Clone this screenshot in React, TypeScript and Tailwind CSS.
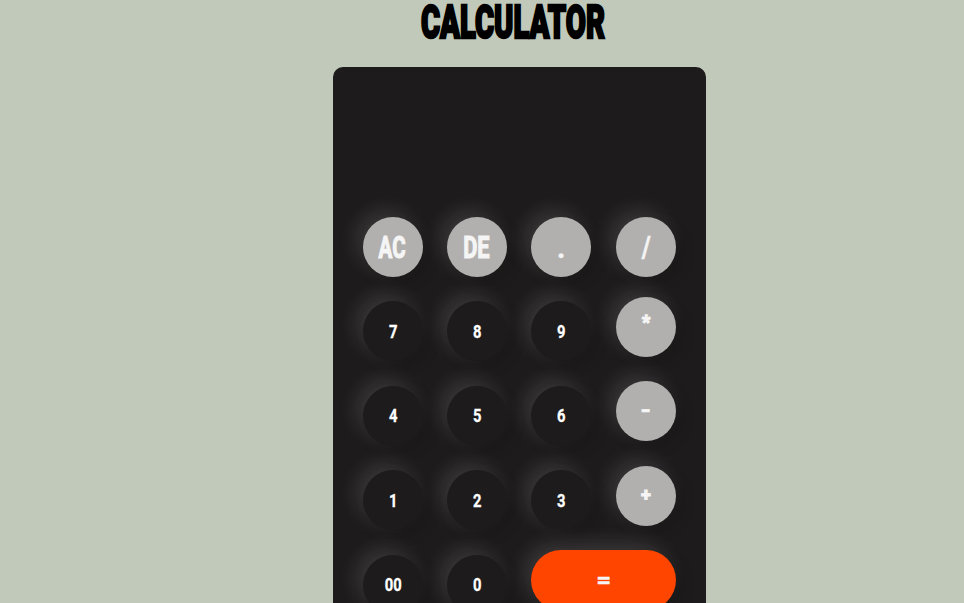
import { clsx } from 'clsx';

type Key = { label: string; kind: 'num' | 'op' | 'eq'; top?: string; glyph: string };

const num = 'text-[18px] scale-x-[0.82] [-webkit-text-stroke:0.3px_white]';

const rows: { keys: Key[] }[] = [
  {
    keys: [
      { label: 'AC', kind: 'op', glyph: 'text-[32px] scale-x-[0.64] -translate-x-px [-webkit-text-stroke:1.2px_#f5f5f5]' },
      { label: 'DE', kind: 'op', glyph: 'text-[32px] scale-x-[0.68] -translate-x-px [-webkit-text-stroke:1.2px_#f5f5f5]' },
      { label: '.', kind: 'op', glyph: 'text-[32px] scale-x-[0.9] translate-x-[0.5px] [-webkit-text-stroke:0.4px_#f5f5f5]' },
      { label: '/', kind: 'op', glyph: 'text-[29px] scale-x-[0.84] [-webkit-text-stroke:0.4px_#f5f5f5]' },
    ],
  },
  {
    keys: [
      { label: '7', kind: 'num', top: 'mt-1', glyph: clsx(num, 'translate-y-px') },
      { label: '8', kind: 'num', top: 'mt-1', glyph: clsx(num, 'translate-y-px') },
      { label: '9', kind: 'num', top: 'mt-1', glyph: clsx(num, 'translate-y-px') },
      { label: '*', kind: 'op', glyph: 'text-[18px] -translate-y-[5px] [-webkit-text-stroke:1.3px_#f5f5f5]' },
    ],
  },
  {
    keys: [
      { label: '4', kind: 'num', top: 'mt-[5px]', glyph: num },
      { label: '5', kind: 'num', top: 'mt-[5px]', glyph: num },
      { label: '6', kind: 'num', top: 'mt-[5px]', glyph: num },
      { label: '-', kind: 'op', glyph: 'text-[24px] scale-x-[1.1] -translate-y-px [-webkit-text-stroke:0.6px_#f5f5f5]' },
    ],
  },
  {
    keys: [
      { label: '1', kind: 'num', top: 'mt-1', glyph: clsx(num, 'translate-y-px') },
      { label: '2', kind: 'num', top: 'mt-1', glyph: clsx(num, 'translate-y-px') },
      { label: '3', kind: 'num', top: 'mt-1', glyph: clsx(num, 'translate-y-px') },
      { label: '+', kind: 'op', glyph: 'text-[18px] -translate-y-px [-webkit-text-stroke:1px_#f5f5f5]' },
    ],
  },
  {
    keys: [
      { label: '00', kind: 'num', top: 'mt-[5px]', glyph: num },
      { label: '0', kind: 'num', top: 'mt-[5px]', glyph: num },
      { label: '=', kind: 'eq', glyph: 'text-[22px] scale-x-[1.15] translate-x-[0.5px] [-webkit-text-stroke:0.6px_#f5f5f5]' },
    ],
  },
];

function CalcKey({ label, kind, top, glyph }: Key) {
  return (
    <button
      className={clsx(
        'flex h-[60px] shrink-0 items-center justify-center rounded-full font-bold leading-none shadow-[5px_5px_15px_rgba(0,0,0,0.15),-7px_-7px_20px_rgba(255,255,255,0.13)]',
        kind === 'eq' ? 'col-span-2 w-[145px] bg-[#ff4500] text-[#f5f5f5]' : 'w-[60px]',
        kind === 'op' && 'bg-[#b2b0ae] text-[#f5f5f5]',
        kind === 'num' && 'bg-[#1d1b1c] text-white',
        top,
      )}
    >
      <span className={clsx('block', glyph)}>{label}</span>
    </button>
  );
}

export default function App() {
  return (
    <main className="h-[603px] overflow-hidden bg-[#c1c9ba] font-[Roboto,sans-serif]">
      <h1 className="flex h-[67px] w-[1025px] justify-center pt-[5px] text-[46px] font-black leading-[34px] text-black">
        <span className="block scale-x-[0.635] [-webkit-text-stroke:2.4px_black]">CALCULATOR</span>
      </h1>
      <section className="ml-[333px] h-[640px] w-[373px] rounded-[10px] bg-[#1d1b1c] px-[30px] pt-[150px]">
        {rows.map((row, i) => (
          <div
            key={i}
            className={clsx(
              'grid h-[60px] grid-cols-[84px_84px_85px_60px] items-start',
              i === 1 && 'mt-5',
              i > 1 && 'mt-[24.4px]',
            )}
          >
            {row.keys.map((key) => (
              <CalcKey key={key.label} {...key} />
            ))}
          </div>
        ))}
      </section>
    </main>
  );
}
